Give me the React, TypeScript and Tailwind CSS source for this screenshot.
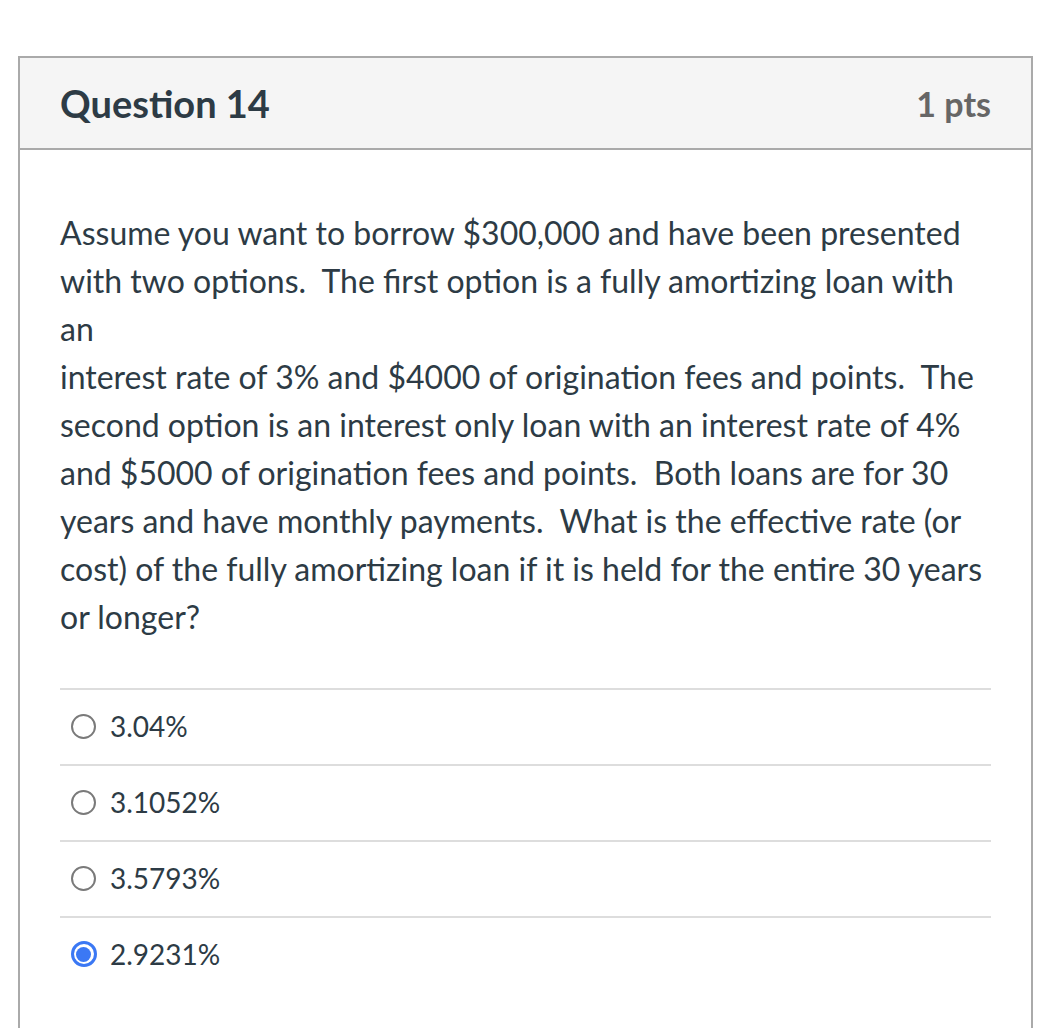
const lines = [
  "Assume you want to borrow $300,000 and have been presented",
  "with two options.\u00a0 The first option is a fully amortizing loan with",
  "an",
  "interest rate of 3% and $4000 of origination fees and points.\u00a0 The",
  "second option is an interest only loan with an interest rate of 4%",
  "and $5000 of origination fees and points.\u00a0 Both loans are for 30",
  "years and have monthly payments.\u00a0 What is the effective rate (or",
  "cost) of the fully amortizing loan if it is held for the entire 30 years",
  "or longer?",
]

const answers = [
  { label: "3.04%", selected: false },
  { label: "3.1052%", selected: false },
  { label: "3.5793%", selected: false },
  { label: "2.9231%", selected: true },
]

function Radio({ selected }: { selected: boolean }) {
  if (selected) {
    return (
      <span className="w-[26px] h-[26px] -mx-[0.5px] rounded-full border-[3px] border-[#3b78f4] flex items-center justify-center flex-shrink-0">
        <span className="w-[15px] h-[15px] rounded-full bg-[#3b78f4]" />
      </span>
    )
  }
  return <span className="w-[25px] h-[25px] rounded-full border-[2px] border-[#7a7a7a] flex-shrink-0" />
}

export default function App() {
  return (
    <div className="min-h-screen bg-white pt-[56px] pl-[18px] font-['Lato',sans-serif] text-[#2d3b45]">
      <div className="w-[1015px] border-2 border-b-0 border-[#aaaaaa] h-[972px]">
        <div className="h-[92px] bg-[#f5f5f5] border-b-2 border-[#aaaaaa] flex items-center justify-between px-[40px]">
          <h2 className="text-[38px] font-bold">Question 14</h2>
          <span className="text-[34px] font-bold text-[#666666]">1 pts</span>
        </div>

        <div className="px-[40px] pt-[59px]">
          <div className="text-[32px] leading-[48px]">
            {lines.map((l, i) => (
              <div key={i} className="whitespace-nowrap">{l}</div>
            ))}
          </div>

          <div className="mt-[47px]">
            {answers.map((a) => (
              <div key={a.label} className="h-[76px] border-t-2 border-[#dddddd] flex items-center pl-[11px] pb-[2px] gap-[14px]">
                <Radio selected={a.selected} />
                <span className="text-[28px]">{a.label}</span>
              </div>
            ))}
          </div>
        </div>
      </div>
    </div>
  )
}
